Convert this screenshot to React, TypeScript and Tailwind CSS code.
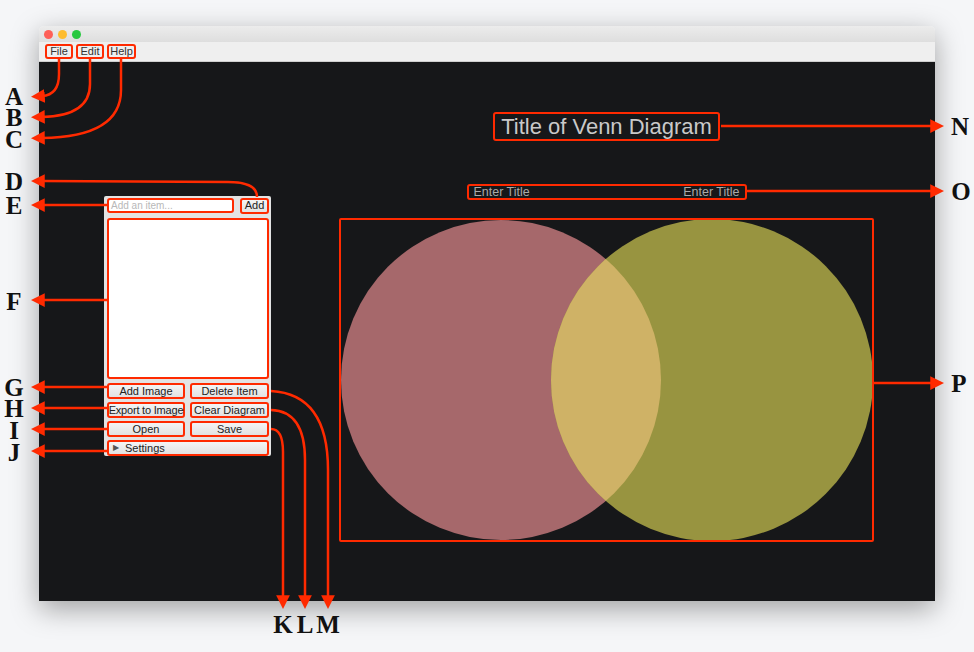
import React from 'react';

const RED = '#ff2a00';

const Letter: React.FC<{ ch: string; x: number; y: number }> = ({ ch, x, y }) => (
  <div
    className="absolute h-[19px] text-[25px] font-bold leading-[19px] text-[#111] -translate-x-1/2 -translate-y-1/2"
    style={{ left: x, top: y, fontFamily: '"Liberation Serif", serif' }}
  >
    {ch}
  </div>
);

const PanelButton: React.FC<{ label: string; className?: string }> = ({ label, className = '' }) => (
  <div
    className={`h-[16px] flex items-center justify-center whitespace-nowrap rounded-[3px] border-2 border-[#ff2a00] bg-gradient-to-b from-[#f4f4f4] to-[#e2e2e2] text-[11px] text-[#222] leading-none ${className}`}
  >
    {label}
  </div>
);

// arrows drawn over the whole shot
const Arrows: React.FC = () => {
  const paths = [
    'M59 59 L59 74 Q59 95 42 96',
    'M90 59 L90 84 Q90 116 42 117',
    'M121 59 L121 90 Q121 137 42 138',
    'M257 197 Q257 182 228 182 L42 181',
    'M107 205 L42 205',
    'M107 300 L42 300',
    'M107 387 L42 387',
    'M107 408 L42 408',
    'M107 429 L42 429',
    'M107 451 L42 451',
    'M271 429 Q283 429 283 452 L283 598',
    'M271 410 Q305 411 305 460 L305 598',
    'M271 391 Q328 394 328 470 L328 598',
    'M721 126 L933 126',
    'M746 191 L933 191',
    'M874 383 L933 383',
  ];
  return (
    <svg className="absolute inset-0 pointer-events-none" width="974" height="652" viewBox="0 0 974 652">
      <defs>
        <marker id="head" viewBox="0 0 10 10" refX="2" refY="5" markerWidth="5.5" markerHeight="5.5" orient="auto">
          <path d="M0 0 L10 5 L0 10 Z" fill={RED} />
        </marker>
      </defs>
      {paths.map((d, i) => (
        <path key={i} d={d} fill="none" stroke={RED} strokeWidth="2.5" markerEnd="url(#head)" />
      ))}
    </svg>
  );
};

const Venn: React.FC = () => (
  <svg width="531" height="320" viewBox="0 0 531 320">
    <defs>
      <clipPath id="leftClip">
        <ellipse cx="160" cy="160" rx="160" ry="160" />
      </clipPath>
    </defs>
    <ellipse cx="160" cy="160" rx="160" ry="160" fill="#a6686b" />
    <ellipse cx="371" cy="160" rx="161" ry="161" fill="#989440" />
    <ellipse cx="371" cy="160" rx="161" ry="161" fill="#cfb266" clipPath="url(#leftClip)" />
  </svg>
);

export default function App() {
  return (
    <div
      className="relative w-[974px] h-[652px] overflow-hidden bg-[#f5f6f8]"
      style={{ fontFamily: '"Liberation Sans", Arial, sans-serif' }}
    >
      <div className="absolute left-[39px] top-[26px] w-[896px] h-[575px] flex flex-col rounded-t-[5px] overflow-hidden shadow-[0_8px_28px_rgba(0,0,0,0.35)]">
        {/* title bar */}
        <div className="h-[16px] bg-gradient-to-b from-[#ececec] to-[#dedede] flex items-center gap-[5px] pl-[5px]">
          <div className="w-[9px] h-[9px] rounded-full bg-[#fe5f57]" />
          <div className="w-[9px] h-[9px] rounded-full bg-[#febc2e]" />
          <div className="w-[9px] h-[9px] rounded-full bg-[#28c840]" />
        </div>
        {/* menu bar */}
        <div className="h-[20px] bg-[#efefef] border-b border-[#cfcfcf] flex items-center gap-[3px] pl-[6px]">
          {['File', 'Edit', 'Help'].map((m) => (
            <div
              key={m}
              className={`h-[15px] ${m === 'Help' ? 'w-[29px]' : 'w-[28px]'} flex items-center justify-center rounded-[3px] border-2 border-[#ff2a00] text-[11px] text-[#333] leading-none`}
            >
              {m}
            </div>
          ))}
        </div>
        {/* canvas */}
        <div className="flex-1 bg-[#161719] flex items-start pl-[65px]">
          {/* side panel */}
          <div className="mt-[134px] w-[167px] h-[260px] bg-[#e3e3e3] rounded-[2px] flex flex-col pl-[3px] pr-[2px] pt-[2px] gap-[4px]">
            <div className="flex items-center h-[15px] gap-[6px]">
              <div className="w-[127px] h-[15px] bg-white rounded-[3px] border-2 border-[#ff2a00] flex items-center px-[2px] text-[10px] text-[#b8b8b8] leading-none">
                Add an item...
              </div>
              <PanelButton label="Add" className="w-[29px] h-[15px]" />
            </div>
            <div className="mt-[1px] w-[162px] h-[162px] bg-white rounded-[3px] border-2 border-[#ff2a00]" />
            <div className="flex flex-col gap-[3px]">
              <div className="flex gap-[5px]">
                <PanelButton label="Add Image" className="w-[78px]" />
                <PanelButton label="Delete Item" className="w-[79px]" />
              </div>
              <div className="flex gap-[5px]">
                <PanelButton label="Export to Image" className="w-[78px] text-[10.5px] tracking-[-0.2px]" />
                <PanelButton label="Clear Diagram" className="w-[79px]" />
              </div>
              <div className="flex gap-[5px]">
                <PanelButton label="Open" className="w-[78px]" />
                <PanelButton label="Save" className="w-[79px]" />
              </div>
              <div className="h-[16px] w-[162px] flex items-center gap-[6px] pl-[4px] rounded-[3px] border-2 border-[#ff2a00] bg-gradient-to-b from-[#f4f4f4] to-[#e2e2e2] text-[11px] text-[#222] leading-none">
                <span className="text-[8px] text-[#555]">▶</span>
                Settings
              </div>
            </div>
          </div>
          {/* diagram column */}
          <div className="ml-[68px] w-[535px] flex flex-col items-center">
            <div className="mt-[50px] h-[29px] px-[6px] flex items-center rounded-[3px] border-2 border-[#ff2a00] text-[22px] text-[#c9c9c9] leading-none">
              Title of Venn Diagram
            </div>
            <div className="mt-[43px] w-[280px] h-[16px] flex items-center justify-between px-[5px] rounded-[3px] border-2 border-[#ff2a00] text-[12.5px] text-[#a9a9a9] leading-none">
              <span>Enter Title</span>
              <span>Enter Title</span>
            </div>
            <div className="mt-[18px] w-[535px] h-[324px] border-2 border-[#ff2a00] rounded-[2px] flex items-center justify-center">
              <Venn />
            </div>
          </div>
        </div>
      </div>

      <Arrows />

      <Letter ch="A" x={14} y={96} />
      <Letter ch="B" x={14} y={117} />
      <Letter ch="C" x={14} y={139} />
      <Letter ch="D" x={14} y={181} />
      <Letter ch="E" x={14} y={205} />
      <Letter ch="F" x={14} y={301} />
      <Letter ch="G" x={14} y={387} />
      <Letter ch="H" x={14} y={408} />
      <Letter ch="I" x={14} y={430} />
      <Letter ch="J" x={14} y={452} />
      <Letter ch="K" x={283} y={624} />
      <Letter ch="L" x={305} y={624} />
      <Letter ch="M" x={328} y={624} />
      <Letter ch="N" x={960} y={126} />
      <Letter ch="O" x={961} y={191} />
      <Letter ch="P" x={959} y={383} />
    </div>
  );
}
